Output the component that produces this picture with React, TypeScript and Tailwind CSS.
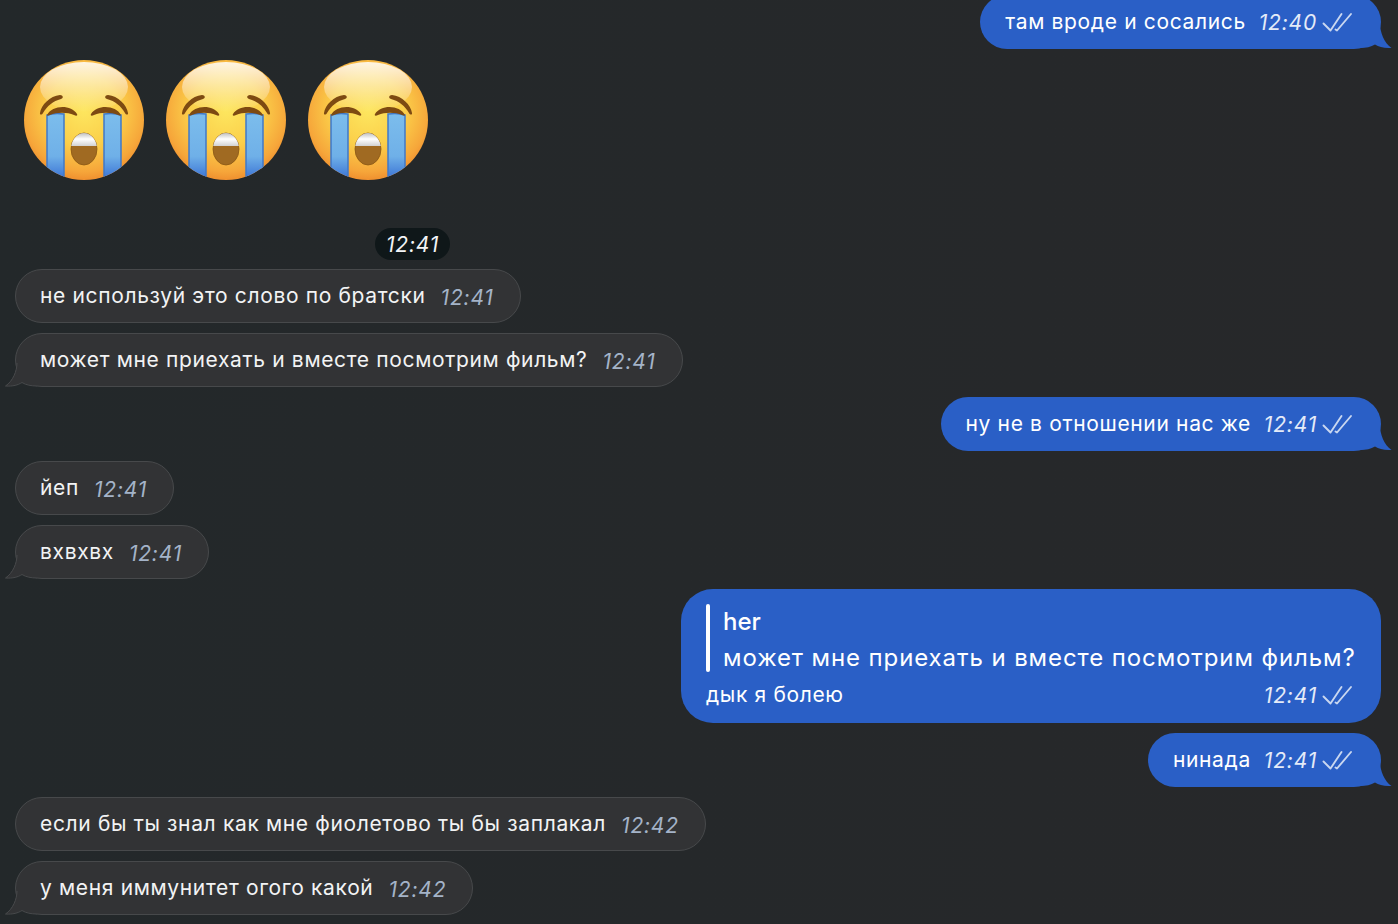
const font = { fontFamily: "Inter, sans-serif" };

function CryingFace({ id }: { id: string }) {
  return (
    <svg width="124" height="124" viewBox="-2 -2 124 124">
      <defs>
        <radialGradient id={`face-${id}`} cx="50%" cy="42%" r="60%">
          <stop offset="0%" stopColor="#fde65f" />
          <stop offset="50%" stopColor="#fbcf4a" />
          <stop offset="85%" stopColor="#f6a63a" />
          <stop offset="100%" stopColor="#ee8a2c" />
        </radialGradient>
        <linearGradient id={`shine-${id}`} x1="0" y1="0" x2="0" y2="1">
          <stop offset="0%" stopColor="#fff" stopOpacity="0.85" />
          <stop offset="100%" stopColor="#fff" stopOpacity="0" />
        </linearGradient>
        <linearGradient id={`tear-${id}`} x1="0" y1="0" x2="0" y2="1">
          <stop offset="0%" stopColor="#7cbdec" />
          <stop offset="60%" stopColor="#6fb0e8" />
          <stop offset="100%" stopColor="#2c62cf" />
        </linearGradient>
        <linearGradient id={`teeth-${id}`} x1="0" y1="0" x2="0" y2="1">
          <stop offset="0%" stopColor="#b5b5b5" />
          <stop offset="50%" stopColor="#fff" />
          <stop offset="100%" stopColor="#d2d2d2" />
        </linearGradient>
        <clipPath id={`circle-${id}`}>
          <circle cx="60" cy="60" r="60" />
        </clipPath>
        <clipPath id={`mouth-${id}`}>
          <ellipse cx="60" cy="89" rx="13" ry="16" />
        </clipPath>
      </defs>
      <circle cx="60" cy="60" r="60" fill={`url(#face-${id})`} />
      <ellipse cx="60" cy="27" rx="44" ry="25" fill={`url(#shine-${id})`} />
      <g clipPath={`url(#circle-${id})`}>
        <path d="M23 55C29 53 34 53 40 54V125H23Z" fill={`url(#tear-${id})`} stroke="#3f78c8" strokeWidth="1.5" />
        <path d="M97 55C91 53 86 53 80 54V125H97Z" fill={`url(#tear-${id})`} stroke="#3f78c8" strokeWidth="1.5" />
      </g>
      <path d="M16 53C17 45 26 36 36 35C39 35 40 38 37 39C29 41 23 46 19 53C18 55 15.500 55 16 53Z" fill="#7d4a12" />
      <path d="M104 53C103 45 94 36 84 35C81 35 80 38 83 39C91 41 97 46 101 53C102 55 104.500 55 104 53Z" fill="#7d4a12" />
      <path d="M23 55C28 45 47 44 53 54C54 56 52 56 50 55C43 52 33 52 26 55C24 56 23 56 23 55Z" fill="#7d4a12" />
      <path d="M97 55C92 45 73 44 67 54C66 56 68 56 70 55C77 52 87 52 94 55C96 56 97 56 97 55Z" fill="#7d4a12" />
      <ellipse cx="60" cy="89" rx="13" ry="16" fill="#a06a22" stroke="#8a5714" strokeWidth="0.8" />
      <g clipPath={`url(#mouth-${id})`}>
        <rect x="46" y="72" width="28" height="14" fill={`url(#teeth-${id})`} />
      </g>
    </svg>
  );
}

function DoubleCheck() {
  return (
    <svg className="shrink-0" width="31" height="20" viewBox="0 0 31 20" fill="none" stroke="#c9d7f0" strokeWidth="1.9" strokeLinecap="round" strokeLinejoin="round">
      <path d="M1.500 11.500L8.500 18.500L19.500 2" />
      <path d="M13.500 17.500L15 18.500L29 2" />
    </svg>
  );
}

function TailLeft() {
  return (
    <svg className="absolute left-[-11px] bottom-[-1px]" width="32" height="26" viewBox="0 0 32 26">
      <path d="M12 0C12 9 8 20 0.500 25C8 25.500 13 24 17 21.500C21 24 26 25 32 25V0Z" fill="#323335" />
      <path d="M12 2C12 10 8 20 0.500 25C8 25.500 13 24 17 21.500C21 24 26 25 32 25" fill="none" stroke="#47494b" strokeWidth="1" />
    </svg>
  );
}

function TailRight() {
  return (
    <svg className="absolute right-[-11px] bottom-0" width="32" height="26" viewBox="0 0 32 26">
      <path d="M20 0C20 9 24 20 31.500 25C24 25.500 19 24 15 21.500C11 24 6 25 0 25V0Z" fill="#2a5fc6" />
    </svg>
  );
}

function Incoming({ text, time, tail }: { text: string; time: string; tail?: boolean }) {
  return (
    <div className="relative self-start flex items-center h-[54px] pl-[24px] pr-[26px] gap-[15px] rounded-[27px] bg-[#323335] border border-[#47494b] text-[21px] tracking-[0.65px] text-[#f2f3f4]">
      {tail && <TailLeft />}
      <span className="relative">{text}</span>
      <span className="relative italic text-[#a4b3c8] text-[21px] tracking-[0.8px] translate-y-[2px]">{time}</span>
    </div>
  );
}

function Outgoing({ text, time }: { text: string; time: string }) {
  return (
    <div className="relative self-end flex items-center h-[54px] pl-[25px] pr-[28px] rounded-[27px] bg-[#2a5fc6] text-[21px] tracking-[0.65px] text-white">
      <TailRight />
      <span className="relative mr-[13px]">{text}</span>
      <span className="relative italic text-[#e4ebf8] text-[21px] tracking-[0.8px] translate-y-[1px] mr-[5px]">{time}</span>
      <span className="relative"><DoubleCheck /></span>
    </div>
  );
}

export default function App() {
  return (
    <div
      style={font}
      className="h-[924px] w-[1398px] overflow-hidden flex flex-col gap-[10px] pl-[15px] pr-[17px] bg-gradient-to-r from-[#23282a] to-[#27282a]"
    >
      <div className="-mt-[5px]">
        <div className="flex justify-end">
          <Outgoing text="там вроде и сосались" time="12:40" />
        </div>
      </div>
      <div className="flex gap-[18px] pl-[7px] -mt-[1px] h-[124px]">
        <CryingFace id="a" />
        <CryingFace id="b" />
        <CryingFace id="c" />
      </div>
      <div className="flex mt-[36px] -mb-[1px] pl-[360px]">
        <span className="h-[32px] w-[75px] pt-[2px] flex items-center justify-center rounded-full bg-[#0f1719] text-[21px] tracking-[0.8px] italic text-[#f2f4f6]">12:41</span>
      </div>
      <Incoming text="не используй это слово по братски" time="12:41" />
      <Incoming text="может мне приехать и вместе посмотрим фильм?" time="12:41" tail />
      <Outgoing text="ну не в отношении нас же" time="12:41" />
      <Incoming text="йеп" time="12:41" />
      <Incoming text="вхвхвх" time="12:41" tail />
      <div className="self-end w-[700px] h-[134px] rounded-[32px] bg-[#2a5fc6] pl-[25px] pr-[28px] pt-[15px] text-white">
        <div className="flex gap-[13px] h-[68px]">
          <div className="w-[4px] shrink-0 rounded-full bg-white" />
          <div className="text-[24px] leading-[36px] whitespace-nowrap tracking-[0.9px]">
            <div className="font-medium tracking-normal">her</div>
            <div>может мне приехать и вместе посмотрим фильм?</div>
          </div>
        </div>
        <div className="flex items-center mt-[10px] h-[26px] text-[21px] tracking-[0.65px]">
          <span className="flex-1">дык я болею</span>
          <span className="italic text-[#e4ebf8] tracking-[0.8px] translate-y-[1px] mr-[5px]">12:41</span>
          <DoubleCheck />
        </div>
      </div>
      <Outgoing text="нинада" time="12:41" />
      <Incoming text="если бы ты знал как мне фиолетово ты бы заплакал" time="12:42" />
      <Incoming text="у меня иммунитет огого какой" time="12:42" tail />
    </div>
  );
}
